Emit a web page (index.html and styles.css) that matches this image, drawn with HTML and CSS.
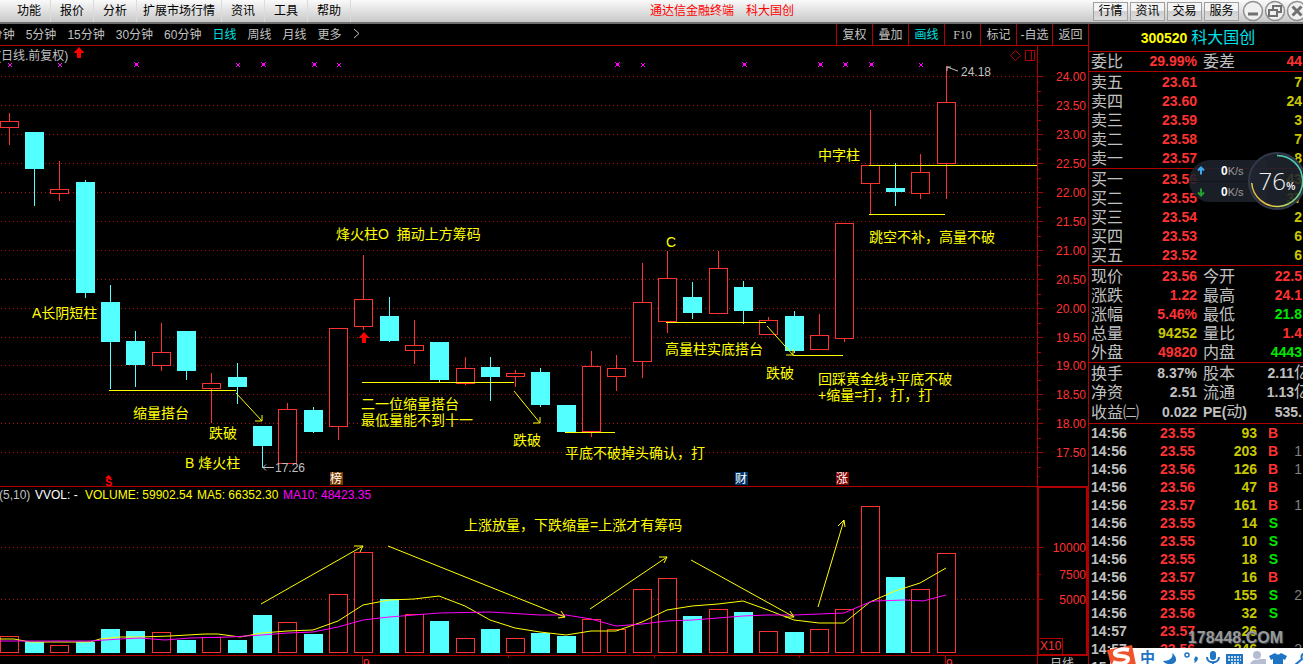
FILE: index.html
```html
<!DOCTYPE html>
<html lang="zh-CN">
<head>
<meta charset="utf-8">
<title>通达信金融终端 科大国创</title>
<link rel="stylesheet" href="styles.css">
</head>
<body>
<header class="menubar">
  <nav class="menus">
    <button class="menu">功能</button><button class="menu">报价</button><button class="menu">分析</button><button class="menu">扩展市场行情</button><button class="menu">资讯</button><button class="menu">工具</button><button class="menu">帮助</button>
  </nav>
  <div class="app-title"><span>通达信金融终端</span><span>科大国创</span></div>
  <div class="quick">
    <button class="quick-btn">行情</button><button class="quick-btn">资讯</button><button class="quick-btn">交易</button><button class="quick-btn">服务</button>
  </div>
  <div class="window-ctl">
    <button class="round" aria-label="最小化"><svg width="22" height="22" viewBox="0 0 22 22"><circle class="ring" cx="11" cy="11" r="9.5"/><path class="glyph" d="M6 14h10"/></svg></button>
    <button class="round" aria-label="还原"><svg width="22" height="22" viewBox="0 0 22 22"><circle class="ring" cx="11" cy="11" r="9.5"/><path class="glyph thin" d="M9 10V6h8v6h-3M5 10h8v6H5z"/></svg></button>
    <button class="round" aria-label="关闭"><svg width="22" height="22" viewBox="0 0 22 22"><circle class="ring" cx="11" cy="11" r="9.5"/><path class="glyph" d="M6.500 6.500l9 9M15.500 6.500l-9 9"/></svg></button>
  </div>
</header>
<main class="workspace">
  <section class="charts">
    <div class="toolbar">
      <div class="periods">
        <button>1分钟</button><button>5分钟</button><button>15分钟</button><button>30分钟</button><button>60分钟</button><button class="active">日线</button><button>周线</button><button>月线</button><button>更多</button><button aria-label="展开"><svg width="7" height="11" viewBox="0 0 7 11"><path d="M1 1l5 4.500-5 4.500" fill="none" stroke="#c0c0c0"/></svg></button>
      </div>
      <div class="tools">
        <button>复权</button><button>叠加</button><button class="active">画线</button><button class="serif">F10</button><button>标记</button><button>-自选</button><button>返回</button>
      </div>
    </div>
    <svg class="plot" viewBox="0 46 1088 618" role="img" aria-label="科大国创 日线">
      <g id="grid" class="crisp"></g>
      <g class="frame crisp">
        <path d="M0 486.500H1088M0 655.500H1088M1037.500 46V664"/>
        <path class="thick" d="M1038 487H1087V655H1038z"/>
        <path d="M1039.500 638.500H1062.500V653.500M508.500 656v2M654.500 656v2M799.500 656v2M362.500 656v8M945.500 656v8"/>
        <path d="M1025.500 50.500h9v10h-9zM1031.500 50v10"/>
      </g>
      <path class="diamond" d="M1015.500 50.500l5 5-5 5-5-5z"/>
      <g id="candles" class="crisp"></g>
      <g id="volume" class="crisp"></g>
      <g id="marks" class="marks crisp"></g>
      <g class="average">
        <path class="ma5" d="M0 639h14l16 3h60l10-3 20-2h20l30-1 35-2h13l22 3 22-4 25-2 26-1 25-9 25-16 26-5 25-1 25-3 26 10 25 14 25 8 25 4 26 3 25-4h25l26-9 25-12 25-4 26-2 25-3 25 9 26 10 25 3h25l26-21 25-11 25-8 26-15"/>
        <path class="ma10" d="M0 641h90l30-2 20-1 25 2 25-2 40-1 32-2 25-2 26-1 25-5 25-7 26-3 25-2 25-2 51-1 50 3h26l25 4 25 7 26-2 25-3 25-1 26-2 25-2 25-1h26l50-2 26-11 5-1 30-1 18 1 23-6"/>
      </g>
      <g class="drawn crisp">
        <path d="M109 390.500h127M362 382.500h152M565 432.500h50M666 322.500h100M793 355.500h50M869 165.500h168M869 214.500h76"/>
      </g>
      <g class="drawn">
        <path d="M236 393l26 28m0-6v6h-7M514 391l26 32m0-6v6h-7M767 326l26 29m0-6v6h-7M261 604l102-58m-9 0h9l-3 6M388 546l177 71m-4-6l4 6-7 1M590 609l77-52m-8 0h8l-3 6M691 560l103 57m-4-6l4 6h-9M818 607l26-87m-6 6l6-6 1 7"/>
      </g>
      <g class="pointer"><path d="M958 71l-11-4m0 4v-4h4M274 467.500h-11m3-3l-3 3 3 3"/></g>
      <g class="signal"><path d="M79 47l5.500 6H81v5h-4v-5h-3.500zM364 332l5.500 6H366v5h-4v-5h-3.500zM108.500 475l3.500 3h-7z"/></g>
      <g class="note">
        <text x="336" y="239">烽火柱O&#160; 捅动上方筹码</text>
        <text x="666" y="247">C</text>
        <text x="32" y="318">A长阴短柱</text>
        <text x="133" y="418">缩量搭台</text>
        <text x="209" y="438">跌破</text>
        <text x="185" y="468">B 烽火柱</text>
        <text x="361" y="409">二一位缩量搭台</text>
        <text x="361" y="425">最低量能不到十一</text>
        <text x="513" y="445">跌破</text>
        <text x="565" y="458">平底不破掉头确认，打</text>
        <text x="665" y="354">高量柱实底搭台</text>
        <text x="766" y="378">跌破</text>
        <text x="818" y="384">回踩黄金线+平底不破</text>
        <text x="818" y="400">+缩量=打，打，打</text>
        <text x="818" y="160">中字柱</text>
        <text x="869" y="242">跳空不补，高量不破</text>
        <text x="464" y="530">上涨放量，下跌缩量=上涨才有筹码</text>
      </g>
      <g class="small">
        <text x="-3" y="60">(日线.前复权)</text>
        <text x="961" y="76">24.18</text>
        <text x="275" y="472">17.26</text>
        <text x="-1" y="499">(5,10)</text>
        <text class="white" x="35" y="499">VVOL: -</text>
        <text class="yellow" x="85" y="499">VOLUME: 59902.54</text>
        <text class="yellow" x="197" y="499">MA5: 66352.30</text>
        <text class="magenta" x="283" y="499">MA10: 48423.35</text>
        <text x="1050" y="668">日线</text>
        <text class="red" x="1040" y="650">X10</text>
        <text class="red" x="363" y="668">9</text>
        <text class="red" x="946" y="668">9</text>
        <text class="signal bold" x="105" y="486">S</text>
      </g>
      <g id="scale" class="scale"></g>
      <g class="badge">
        <rect x="330" y="472" width="13" height="13" fill="#7b3a00"/><text x="330" y="483">榜</text>
        <rect x="735" y="472" width="13" height="13" fill="#00336b"/><text x="735" y="483">财</text>
        <rect x="836" y="472" width="13" height="13" fill="#800000"/><text x="836" y="483">涨</text>
      </g>
    </svg>
  </section>
  <aside class="quote">
    <h1 class="stock"><span class="code">300520</span><span>科大国创</span></h1>
    <table class="block">
      <colgroup><col class="c1"><col class="c2"><col class="c3"><col></colgroup>
      <tr><th>委比</th><td class="up">29.99%</td><th class="second">委差</th><td class="up">44</td></tr>
    </table>
    <table class="block five">
      <colgroup><col class="c1"><col class="c2"><col></colgroup>
      <tr><th>卖五</th><td class="up">23.61</td><td class="vol">7</td></tr>
      <tr><th>卖四</th><td class="up">23.60</td><td class="vol">24</td></tr>
      <tr><th>卖三</th><td class="up">23.59</td><td class="vol">3</td></tr>
      <tr><th>卖二</th><td class="up">23.58</td><td class="vol">7</td></tr>
      <tr><th>卖一</th><td class="up">23.57</td><td class="vol">8</td></tr>
    </table>
    <table class="block five">
      <colgroup><col class="c1"><col class="c2"><col></colgroup>
      <tr><th>买一</th><td class="up">23.56</td><td class="vol">43</td></tr>
      <tr><th>买二</th><td class="up">23.55</td><td class="vol">37</td></tr>
      <tr><th>买三</th><td class="up">23.54</td><td class="vol">2</td></tr>
      <tr><th>买四</th><td class="up">23.53</td><td class="vol">6</td></tr>
      <tr><th>买五</th><td class="up">23.52</td><td class="vol">6</td></tr>
    </table>
    <table class="block five">
      <colgroup><col class="c1"><col class="c2"><col class="c3"><col></colgroup>
      <tr><th>现价</th><td class="up">23.56</td><th class="second">今开</th><td class="up">22.5</td></tr>
      <tr><th>涨跌</th><td class="up">1.22</td><th class="second">最高</th><td class="up">24.1</td></tr>
      <tr><th>涨幅</th><td class="up">5.46%</td><th class="second">最低</th><td class="down">21.8</td></tr>
      <tr><th>总量</th><td class="vol">94252</td><th class="second">量比</th><td class="up">1.4</td></tr>
      <tr><th>外盘</th><td class="up">49820</td><th class="second">内盘</th><td class="down">4443</td></tr>
    </table>
    <table class="block three">
      <colgroup><col class="c1"><col class="c2"><col class="c3"><col></colgroup>
      <tr><th>换手</th><td>8.37%</td><th class="second">股本</th><td><span class="cut">2.11<span class="unit">亿</span></span></td></tr>
      <tr><th>净资</th><td>2.51</td><th class="second">流通</th><td><span class="cut">1.13<span class="unit">亿</span></span></td></tr>
      <tr><th>收益㈡</th><td>0.022</td><th class="second"><b>PE(</b>动<b>)</b></th><td>535.</td></tr>
    </table>
    <table class="ticks">
      <colgroup><col class="t1"><col class="t2"><col class="t3"><col class="t4"><col></colgroup>
      <tr><td>14:56</td><td class="up">23.55</td><td class="vol">93</td><td class="up">B</td><td></td></tr>
      <tr><td>14:56</td><td class="up">23.55</td><td class="vol">203</td><td class="up">B</td><td>1</td></tr>
      <tr><td>14:56</td><td class="up">23.56</td><td class="vol">126</td><td class="up">B</td><td>1</td></tr>
      <tr><td>14:56</td><td class="up">23.56</td><td class="vol">47</td><td class="up">B</td><td></td></tr>
      <tr><td>14:56</td><td class="up">23.57</td><td class="vol">161</td><td class="up">B</td><td>1</td></tr>
      <tr><td>14:56</td><td class="up">23.55</td><td class="vol">14</td><td class="down">S</td><td></td></tr>
      <tr><td>14:56</td><td class="up">23.55</td><td class="vol">10</td><td class="down">S</td><td></td></tr>
      <tr><td>14:56</td><td class="up">23.55</td><td class="vol">18</td><td class="down">S</td><td></td></tr>
      <tr><td>14:56</td><td class="up">23.57</td><td class="vol">16</td><td class="up">B</td><td></td></tr>
      <tr><td>14:56</td><td class="up">23.55</td><td class="vol">155</td><td class="down">S</td><td>2</td></tr>
      <tr><td>14:56</td><td class="up">23.56</td><td class="vol">32</td><td class="down">S</td><td></td></tr>
      <tr><td>14:57</td><td class="up">23.57</td><td class="vol">26</td><td></td><td></td></tr>
      <tr><td>14:57</td><td class="up">23.56</td><td class="vol">246</td><td></td><td>2</td></tr>
      <tr><td>15:00</td><td class="up">23.56</td><td class="vol"></td><td></td><td></td></tr>
    </table>
  </aside>
</main>
<div class="speed">
  <div class="pill">
    <div class="rate"><svg width="8" height="9" viewBox="0 0 8 9"><path d="M4 8.500V1.500M1 4.500l3-3 3 3" fill="none" stroke="#3fa9f0" stroke-width="2"/></svg><b>0</b><span>K/s</span></div>
    <div class="rate"><svg width="8" height="9" viewBox="0 0 8 9"><path d="M4 .5v7M1 4.500l3 3 3-3" fill="none" stroke="#20a030" stroke-width="2"/></svg><b>0</b><span>K/s</span></div>
  </div>
  <div class="gauge">
    <svg class="arc" width="60" height="60" viewBox="0 0 60 60">
      <defs><linearGradient id="arcfill" x1="1" y1="0" x2="0" y2="1"><stop offset="0" stop-color="#35c8c8"/><stop offset=".45" stop-color="#70dc90"/><stop offset=".75" stop-color="#d8d848"/><stop offset="1" stop-color="#f08828"/></linearGradient></defs>
      <circle cx="30" cy="30" r="28" fill="#20242f" fill-opacity=".88" stroke="#30384a" stroke-width="2"/>
      <path d="M30 4.500A25.500 25.500 0 1 1 4.700 32" fill="none" stroke="url(#arcfill)" stroke-width="1.500"/>
    </svg>
    <span class="pct">76<small>%</small></span>
  </div>
</div>
<div class="watermark">178448.COM</div>
<div class="ime">
  <svg class="ime-logo" width="30" height="20" viewBox="0 0 30 20"><path d="M1 5L26 0l4 20H5z" fill="#f0522a"/><path d="M23 5C15 3 8 6 9 9s13 1 13 5-8 6-15 3" fill="none" stroke="#fff" stroke-width="4"/></svg>
  <button class="zh">中</button>
  <svg class="ime-icons" width="150" height="17" viewBox="0 0 150 17">
    <g fill="#1f74c4">
      <path d="M12 5c2 4-2 8-9 8 3 5 14 4 13-2 0-2-2-5-4-6z"/>
      <path d="M35 9c3-2 5 4-1 6 1-2 1-2 0-3z"/>
      <rect x="50" y="3" width="6" height="9" rx="3"/>
      <path d="M66 6h17v11H66z"/>
      <path d="M115 5c2 2 4 2 6 0l6 3-2 4-2-1v6h-10v-6l-2 1-2-4z"/>
    </g>
    <circle cx="27" cy="7" r="2" fill="none" stroke="#1f74c4" stroke-width="1.500"/>
    <path d="M47 9c0 7 12 7 12 0M53 14v3M149 5c-5-1-9 2-7 6l-7 6" fill="none" stroke="#1f74c4" stroke-width="2"/>
    <path d="M68 9h13M68 12h13M71 15h8" stroke="#fff" stroke-width="1.500" stroke-dasharray="2 1"/>
    <g fill="#b4bdd2"><circle cx="97" cy="7" r="4"/><path d="M90 17c0-7 14-7 14 0z"/><path d="M99 11h7v6h-7z"/></g>
  </svg>
</div>
<script src="chart.js"></script>
</body>
</html>
```
FILE: styles.css
```css
* { box-sizing: border-box; }
body {
  margin: 0;
  height: 100vh;
  display: flex;
  flex-direction: column;
  position: relative;
  overflow: hidden;
  background: #000;
  color: #c0c0c0;
  font: 12px/16px "Liberation Sans", "Noto Sans CJK SC", sans-serif;
}
button {
  margin: 0;
  padding: 0;
  border: 0;
  background: none;
  color: inherit;
  font: inherit;
  white-space: nowrap;
}

/* Menu bar */
.menubar {
  flex: none;
  display: flex;
  align-items: stretch;
  height: 24px;
  overflow: hidden;
  background: linear-gradient(#fafafa, #c8c8c8);
  border-bottom: 2px solid #707070;
  color: #000;
}
.menus { display: flex; padding-left: 8px; }
.menu { min-width: 43px; padding: 0 6px; border-right: 1px solid #dcdcdc; }
.app-title {
  flex: 1;
  display: flex;
  align-items: center;
  justify-content: center;
  gap: 12px;
  color: #f00;
}
.quick { display: flex; align-items: center; gap: 2px; padding-right: 3px; }
.quick-btn {
  width: 35px;
  height: 19px;
  border: 1px solid #a0a0a0;
  background: linear-gradient(#f4f4f4 50%, #d0d0d0 50%, #dcdcdc);
}
.window-ctl { display: flex; flex: none; width: 61px; }
.round { flex: none; width: 22px; height: 22px; }
.round svg { display: block; }
.ring { fill: #f0f0f0; stroke: #909090; stroke-width: 1.5; }
.glyph { fill: none; stroke: #707070; stroke-width: 3; }
.thin { stroke-width: 2; }

/* Work area */
.workspace { flex: 1; min-height: 0; display: flex; }
.charts { flex: 1; min-width: 0; overflow: hidden; }
.toolbar {
  display: flex;
  justify-content: space-between;
  height: 22px;
  border-bottom: 1px solid #b00000;
}
.periods { display: flex; gap: 11px; margin-left: -16px; }
.tools { display: flex; }
.tools button { width: 36px; border-left: 1px solid #b00000; }
.toolbar .active { color: #00e0e0; }
.toolbar .serif { font-family: "Liberation Serif", serif; }

/* Charts */
.plot { display: block; width: 100%; }
.crisp { shape-rendering: crispEdges; }
.frame path { fill: none; stroke: #b00000; }
.frame .thick { stroke-width: 2; }
.diamond { fill: none; stroke: #b00000; }
.grid-line { stroke: #b01010; stroke-dasharray: 1 3; }
.tick { stroke: #b00000; }
.rise { fill: #000; stroke: #ff3232; }
.fall { fill: #54ffff; }
.wick-rise { stroke: #ff3232; }
.wick-fall { stroke: #54ffff; }
.marks { fill: #f0f; }
.average path { fill: none; stroke-width: 1; }
.average .ma5 { stroke: #ff0; }
.average .ma10 { stroke: #f0f; }
.drawn path { fill: none; stroke: #ff0; }
.pointer path { fill: none; stroke: #c0c0c0; }
.signal, .small .signal { fill: #f00; }
.note { fill: #ff0; font-size: 14px; }
.small { fill: #c0c0c0; font-size: 12px; }
.small .white { fill: #fff; }
.small .yellow { fill: #ff0; }
.small .magenta { fill: #f0f; }
.small .red { fill: #ff3232; }
.small .bold { font-size: 11px; font-weight: bold; }
.scale { fill: #ff3232; font-size: 12px; text-anchor: end; }
.badge { font-size: 12px; }
.badge text { fill: #fff; }

/* Quote panel */
.quote {
  flex: none;
  width: 215px;
  overflow: hidden;
  border-left: 1px solid #b00000;
  font-size: 14px;
}
.stock {
  display: flex;
  justify-content: center;
  align-items: center;
  gap: 4px;
  height: 28px;
  margin: 0;
  padding-left: 4px;
  border-bottom: 1px solid #b00000;
  color: #00e0e8;
  font-size: 16px;
  font-weight: normal;
}
.code { color: #ff0; font-size: 14px; font-weight: bold; }
table { width: 100%; table-layout: fixed; border-collapse: separate; border-spacing: 0; }
.block { border-bottom: 1px solid #b00000; }
.five { padding-top: 1px; }
.three { padding: 1px 0; }
th, td { padding: 0; white-space: nowrap; }
th { font-size: 16px; font-weight: normal; text-align: left; padding-left: 2px; }
th b { font-size: 14px; }
td { font-weight: bold; text-align: right; }
.block th, .block td { height: 19px; line-height: 19px; }
.block td:last-child { padding-right: 1px; }
.c1 { width: 50px; }
.c2 { width: 58px; }
.c3 { width: 44px; }
.block .second { padding-left: 6px; }
.up { color: #ff3232; }
.down { color: #00e600; }
.vol { color: #c8c800; }
.cut { display: block; height: 19px; margin-right: -8px; }
.unit { font-size: 16px; font-weight: normal; line-height: 16px; }
.t1 { width: 48px; }
.t2 { width: 58px; }
.t3 { width: 62px; }
.t4 { width: 21px; }
.ticks td { height: 18px; line-height: 18px; }
.ticks td:first-child { padding-left: 2px; text-align: left; }
.ticks td:last-child { padding-right: 1px; color: #808080; font-weight: normal; }

/* Network speed widget */
.speed {
  position: absolute;
  top: 151px;
  right: -4px;
  display: flex;
  align-items: center;
}
.pill {
  width: 78px;
  height: 42px;
  margin-right: -20px;
  border-radius: 21px 0 0 21px;
  background: rgba(30, 34, 44, 0.88);
}
.rate {
  display: flex;
  align-items: center;
  height: 21px;
  padding-left: 8px;
  color: #999;
  font-size: 11px;
}
.rate + .rate { border-top: 1px solid #14161c; }
.rate svg { margin-right: 16px; }
.rate b { color: #fff; font-size: 12px; }
.gauge { position: relative; width: 60px; height: 60px; }
.arc { display: block; }
.pct {
  position: absolute;
  inset: 0;
  display: flex;
  align-items: baseline;
  justify-content: center;
  color: #f0f0f0;
  font: 300 24px/60px "Open Sans", sans-serif;
}
.pct small { font-size: 11px; font-weight: 600; }

/* Overlays at the bottom edge */
.watermark {
  position: absolute;
  right: 20px;
  bottom: 16px;
  color: #999;
  font: bold 16px/20px "Liberation Sans", sans-serif;
  text-shadow: 1px 1px 1px #444;
}
.ime {
  position: absolute;
  right: 0;
  bottom: 0;
  display: flex;
  align-items: center;
  width: 193px;
  height: 16px;
  background: #fff;
  color: #1f74c4;
}
.ime-logo { flex: none; margin: -3px 0 0 -4px; }
.zh { width: 14px; margin: 2px 6px 0 4px; font: bold 15px/16px "Noto Sans CJK SC", sans-serif; }
.ime-icons { flex: none; }
```
FILE: chart.js
```js
// [type, left, body top, body bottom, high, low, volume top]
const bars = [
  ["r",0,121,128,113,145,636],["f",25,132,169,132,206,642],["r",50,189,194,161,201,645],
  ["f",76,182,293,180,298,642],["f",101,302,342,285,389,629],["f",126,341,365,331,387,631],
  ["r",152,352,366,323,371,632],["f",177,331,371,331,380,640],["r",202,383,389,373,423,637],
  ["f",228,377,387,363,404,640],["f",253,426,446,426,468,615],["r",278,409,464,403,464,622],
  ["f",304,410,432,407,433,634],["r",329,328,427,328,440,594],["r",354,299,327,255,330,552],
  ["f",380,316,341,297,342,599],["r",405,345,351,320,364,614],["f",430,342,380,342,382,621],
  ["r",456,368,384,357,385,638],["f",481,367,377,357,401,629],["r",506,373,377,370,387,638],
  ["f",531,372,405,368,407,633],["f",557,405,432,405,432,636],["r",582,366,432,351,437,619],
  ["r",607,368,377,355,391,629],["r",633,302,362,263,378,589],["r",658,278,322,251,333,578],
  ["f",683,297,313,282,319,616],["r",709,268,314,251,314,609],["f",734,287,311,281,324,612],
  ["r",759,320,335,317,335,631],["f",785,316,351,311,353,632],["r",810,335,350,314,350,629],
  ["r",835,223,339,223,342,609],["r",861,165,184,110,214,506],["f",886,188,192,163,206,577],
  ["r",911,172,194,154,199,589],["r",937,102,164,66,199,553]
];

function add(id, name, attrs, text) {
  const el = document.createElementNS("http://www.w3.org/2000/svg", name);
  for (const key in attrs) el.setAttribute(key, attrs[key]);
  if (text) el.textContent = text;
  document.getElementById(id).appendChild(el);
}

function body(id, type, left, top, bottom) {
  if (type === "r") {
    add(id, "rect", {class: "rise", x: left + 0.5, y: top + 0.5, width: 18, height: bottom - top - 1});
  } else {
    add(id, "rect", {class: "fall", x: left, y: top, width: 19, height: bottom - top});
  }
}

for (const [type, left, top, bottom, high, low, volume] of bars) {
  const wick = type === "r" ? "wick-rise" : "wick-fall";
  add("candles", "path", {class: wick, d: `M${left + 9.5} ${high}V${low}`});
  body("candles", type, left, top, bottom);
  body("volume", type, left, volume, 653);
}

const levels = [76, 105, 134, 163, 192, 221, 250, 279, 308, 337, 365, 394, 423, 452];
levels.forEach((y, i) => {
  add("grid", "path", {class: "grid-line", d: `M1 ${y + 0.5}H1036`});
  add("grid", "path", {class: "tick", d: `M1038 ${y + 0.5}h5M1038 ${y + 15.5}h3M1038 ${y + 6.5}h1M1038 ${y + 24.5}h1`});
  add("scale", "text", {x: 1086, y: y + 5}, (24 - i * 0.5).toFixed(2));
});
[[547, "10000"], [574, "7500"], [599, "5000"]].forEach(([y, label]) => {
  if (label !== "7500") add("grid", "path", {class: "grid-line", d: `M1 ${y + 0.5}H1036`});
  add("grid", "path", {class: "tick", d: `M1038 ${y + 0.5}h${label === "7500" ? 3 : 5}`});
  add("scale", "text", {x: 1086, y: y + 5}, label);
});

const stars = [[10,0],[60,0],[136,1],[238,0],[263,1],[314,1],[339,0],[617,1],[643,0],[744,1],[820,1],[845,1],[871,1],[921,0]];
for (const [x, big] of stars) {
  const d = big
    ? `M${x - 2} 62h1v1h-1zM${x + 2} 62h1v1h-1zM${x - 2} 66h1v1h-1zM${x + 2} 66h1v1h-1zM${x - 1} 63h3v3h-3z`
    : `M${x - 2} 63h1v1h-1zM${x + 1} 63h1v1h-1zM${x - 2} 66h1v1h-1zM${x + 1} 66h1v1h-1zM${x - 1} 64h2v2h-2z`;
  add("marks", "path", {d});
}
```
